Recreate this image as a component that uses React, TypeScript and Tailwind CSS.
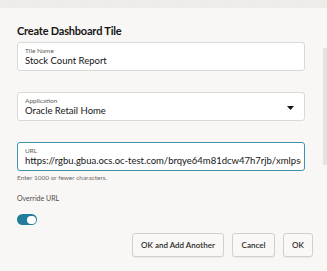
import React from "react";

const font = { fontFamily: 'Lato, "Open Sans", sans-serif' };

function Field({ label, value, focused, select }: { label: string; value: string; focused?: boolean; select?: boolean }) {
  return (
    <div
      className={`relative h-[29px] w-[288px] rounded-[3px] bg-white pl-[7px] pr-[3px] ${
        focused ? "border border-[#3f93ad]" : "border border-[#dcd9d5]"
      } flex flex-col justify-center overflow-hidden`}
    >
      <div className="text-[6.5px] leading-[8px] text-[#5f5c58]">{label}</div>
      <div className="flex items-center">
        <div className="whitespace-nowrap overflow-hidden text-[9.5px] leading-[12px] text-[#161513] flex-1">{value}</div>
        {select && (
          <svg width="7" height="4" viewBox="0 0 7 4" className="mr-[7px] -mt-[6px]">
            <path d="M0 0 L7 0 L3.5 4 Z" fill="#161513" />
          </svg>
        )}
      </div>
    </div>
  );
}

function Btn({ children, w }: { children: React.ReactNode; w: string }) {
  return (
    <div className={`${w} h-[24px] rounded-[3px] border border-[#d3d0cc] bg-[#f9f8f6] flex items-center justify-center text-[8px] font-semibold text-[#2c2a28] shadow-[0_1px_1px_rgba(0,0,0,0.06)]`}>
      {children}
    </div>
  );
}

export default function App() {
  return (
    <div className="relative h-[271px] w-[327px] overflow-hidden bg-[#f8f7f5]" style={font}>
      <div className="h-[8px] w-full bg-[repeating-linear-gradient(90deg,#ebe9e6_0px,#f2f0ed_2px,#e8e6e3_3px)]" />
      <div className="pl-[17px] pt-[15px]">
        <div className="text-[11px] font-bold leading-[16px] tracking-[-0.2px] text-[#161513]">Create Dashboard Tile</div>
        <div className="mt-[3px]">
          <Field label="Tile Name" value="Stock Count Report" />
        </div>
        <div className="mt-[21px]">
          <Field label="Application" value="Oracle Retail Home" select />
        </div>
        <div className="mt-[21px]">
          <Field label="URL" value="https://rgbu.gbua.ocs.oc-test.com/brqye64m81dcw47h7rjb/xmlpserver" focused />
        </div>
        <div className="mt-[2px] text-[6.5px] leading-[9px] text-[#6f6c68]">Enter 1000 or fewer characters.</div>
        <div className="mt-[12px] text-[7px] leading-[9px] text-[#4f4c48]">Override URL</div>
        <div className="mt-[11px] flex h-[11px] w-[20px] items-center justify-end rounded-full bg-[#227c9b] pr-[1.5px]">
          <div className="h-[8px] w-[9px] rounded-full bg-white" />
        </div>
        <div className="mt-[8px] flex justify-end gap-[8px] pr-[14px]">
          <Btn w="w-[92px]">OK and Add Another</Btn>
          <Btn w="w-[43px]">Cancel</Btn>
          <Btn w="w-[30px]">OK</Btn>
        </div>
      </div>
      <div className="absolute right-0 top-[48px] h-[117px] w-[4px] bg-[#e5e3e0]" />
    </div>
  );
}
